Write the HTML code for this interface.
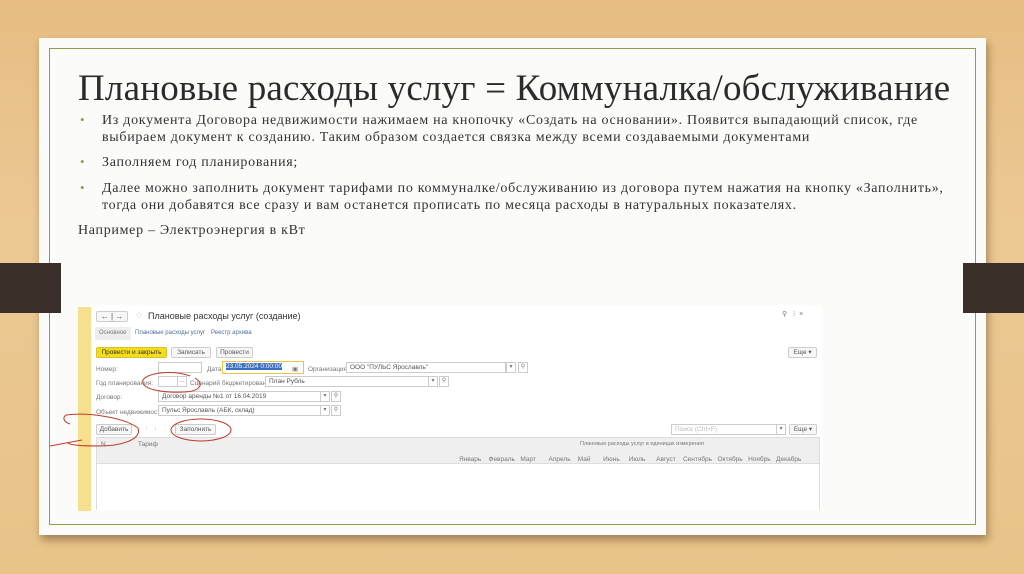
<!DOCTYPE html>
<html><head><meta charset="utf-8"><style>
*{margin:0;padding:0;box-sizing:border-box}
body{width:1024px;height:574px;overflow:hidden;position:relative;background:linear-gradient(180deg,#e7bd83 0%,#ecc893 40%,#e8c489 100%);font-family:"Liberation Serif",serif}
.a{position:absolute}
.paper{left:39px;top:38px;width:947px;height:497px;background:#fbfbfa;box-shadow:2px 5px 8px rgba(80,50,20,.45)}
.frame{left:49px;top:48px;width:927px;height:477px;border:1.5px solid #8ca04c}
.bar{background:#3a2f28;height:50px;top:263px}
h1{position:absolute;left:78px;top:67px;font-weight:normal;font-size:37px;color:#2b2b2b;letter-spacing:0.2px;white-space:nowrap}
.t{font-size:14px;color:#333;line-height:17px;white-space:nowrap;letter-spacing:0.7px}
.b{color:#8ca04c;font-size:13px}
.s{font-family:"Liberation Sans",sans-serif;font-size:6.5px;color:#777;white-space:nowrap}
.btn{border:1px solid #ccc;background:#f7f7f7;border-radius:2px;height:11px;font-family:"Liberation Sans",sans-serif;font-size:6.5px;color:#555;text-align:center;line-height:9px}
.fld{border:1px solid #ccc;background:#fff;height:11px;font-family:"Liberation Sans",sans-serif;font-size:6.5px;color:#555;padding-left:3px;line-height:9px;white-space:nowrap}
.sq{border:1px solid #ccc;background:#fff;width:10px;height:11px;font-size:6px;color:#777;text-align:center;line-height:9px;font-family:"Liberation Sans",sans-serif}
.lnk{color:#4a6fa5}
</style></head><body>
<div class="a paper"></div>
<div class="a frame"></div>
<div class="a bar" style="left:0;width:61px"></div>
<div class="a bar" style="left:963px;width:61px"></div>
<h1>Плановые расходы услуг = Коммуналка/обслуживание</h1>
<div class="a b" style="left:80px;top:112px">•</div>
<div class="a t" style="left:102px;top:112px">Из документа Договора недвижимости нажимаем на кнопочку «Создать на основании». Появится выпадающий список, где<br>выбираем документ к созданию. Таким образом создается связка между всеми создаваемыми документами</div>
<div class="a b" style="left:80px;top:154px">•</div>
<div class="a t" style="left:102px;top:154px">Заполняем год планирования;</div>
<div class="a b" style="left:80px;top:180px">•</div>
<div class="a t" style="left:102px;top:180px">Далее можно заполнить документ тарифами по коммуналке/обслуживанию из договора путем нажатия на кнопку «Заполнить»,<br>тогда они добавятся все сразу и вам останется прописать по месяца расходы в натуральных показателях.</div>
<div class="a t" style="left:78px;top:222px">Например – Электроэнергия в кВт</div>

<div class="a" style="left:78px;top:307px;width:13px;height:204px;background:#f7e08d"></div>
<div class="a" style="left:91px;top:305px;width:731px;height:206px;background:#fff"></div>
<div class="a btn" style="left:96px;top:311px;width:32px;font-size:8px">← | →</div>
<div class="a s" style="left:135px;top:310px;font-size:9px;color:#ccc">☆</div>
<div class="a s" style="left:148px;top:311px;font-size:9px;color:#333">Плановые расходы услуг (создание)</div>
<div class="a s" style="left:782px;top:310px;font-size:7px">⚲ &nbsp; ⁝ &nbsp;×</div>
<div class="a" style="left:95px;top:327px;width:36px;height:13px;background:#eee"></div>
<div class="a s" style="left:99px;top:330px;font-size:6px">Основное</div>
<div class="a s lnk" style="left:135px;top:330px;font-size:6px">Плановые расходы услуг</div>
<div class="a s lnk" style="left:211px;top:330px;font-size:6px">Реестр архива</div>
<div class="a btn" style="left:96px;top:347px;width:71px;background:#f5dd1a;border-color:#d9c12a;color:#333">Провести и закрыть</div>
<div class="a btn" style="left:171px;top:347px;width:40px">Записать</div>
<div class="a btn" style="left:216px;top:347px;width:37px">Провести</div>
<div class="a btn" style="left:788px;top:347px;width:29px">Еще ▾</div>
<div class="a s" style="left:96px;top:366px">Номер:</div>
<div class="a fld" style="left:158px;top:362px;width:44px"></div>
<div class="a s" style="left:207px;top:366px">Дата:</div>
<div class="a fld" style="left:222px;top:361px;width:82px;height:13px;border-color:#e8c640"><span style="background:#3c6fc4;color:#fff">23.05.2024 0:00:00</span></div>
<div class="a s" style="left:292px;top:365px">▣</div>
<div class="a s" style="left:308px;top:366px">Организация:</div>
<div class="a fld" style="left:346px;top:362px;width:160px">ООО "ПУЛЬС Ярославль"</div>
<div class="a sq" style="left:506px;top:362px">▾</div>
<div class="a sq" style="left:518px;top:362px">⚲</div>
<div class="a s" style="left:96px;top:380px">Год планирования:</div>
<div class="a fld" style="left:158px;top:376px;width:20px"></div>
<div class="a sq" style="left:177px;top:376px">…</div>
<div class="a s" style="left:190px;top:380px">Сценарий бюджетирования:</div>
<div class="a fld" style="left:265px;top:376px;width:164px">План Рубль</div>
<div class="a sq" style="left:428px;top:376px">▾</div>
<div class="a sq" style="left:439px;top:376px">⚲</div>
<div class="a s" style="left:96px;top:394px">Договор:</div>
<div class="a fld" style="left:158px;top:391px;width:163px">Договор аренды №1 от 16.04.2019</div>
<div class="a sq" style="left:320px;top:391px">▾</div>
<div class="a sq" style="left:331px;top:391px">⚲</div>
<div class="a s" style="left:96px;top:409px">Объект недвижимости:</div>
<div class="a fld" style="left:158px;top:405px;width:163px">Пульс Ярославль (АБК, склад)</div>
<div class="a sq" style="left:320px;top:405px">▾</div>
<div class="a sq" style="left:331px;top:405px">⚲</div>
<div class="a btn" style="left:96px;top:424px;width:36px">Добавить</div>
<div class="a s" style="left:145px;top:425px;color:#bbb">↑ &nbsp; ↓</div>
<div class="a btn" style="left:175px;top:424px;width:41px">Заполнить</div>
<div class="a fld" style="left:671px;top:424px;width:106px;color:#bbb">Поиск (Ctrl+F)</div>
<div class="a sq" style="left:776px;top:424px">▾</div>
<div class="a btn" style="left:789px;top:424px;width:28px">Еще ▾</div>
<div class="a" style="left:96px;top:437px;width:724px;height:27px;background:#efefef;border:1px solid #ddd"></div>
<div class="a" style="left:96px;top:464px;width:724px;height:46px;border-left:1px solid #ddd;border-right:1px solid #ddd"></div>
<div class="a s" style="left:101px;top:441px">N</div>
<div class="a s" style="left:138px;top:441px">Тариф</div>
<div class="a s" style="left:580px;top:441px;font-size:5.5px">Плановые расходы услуг в единицах измерения</div>
<div class="a s" style="left:459px;top:456px">Январь &nbsp;&nbsp; Февраль &nbsp; Март &nbsp;&nbsp;&nbsp;&nbsp;&nbsp; Апрель &nbsp;&nbsp; Май &nbsp;&nbsp;&nbsp;&nbsp;&nbsp; Июнь &nbsp;&nbsp;&nbsp; Июль &nbsp;&nbsp;&nbsp;&nbsp; Август &nbsp;&nbsp; Сентябрь &nbsp; Октябрь &nbsp; Ноябрь &nbsp; Декабрь</div>
<svg class="a" style="left:0;top:0" width="1024" height="574" fill="none" stroke="#c0392b" stroke-width="1">
<path d="M190 376 C175 370 148 372 143 380 C140 390 165 393 185 392 C200 391 205 384 195 378"/>
<path d="M66 415 C90 412 125 418 138 428 C142 440 120 446 100 446 C80 446 70 445 68 443 M66 415 C62 418 64 422 70 424"/>
<path d="M82 440 L50 446"/>
<ellipse cx="201" cy="430" rx="30" ry="11"/>
</svg>
</body></html>
